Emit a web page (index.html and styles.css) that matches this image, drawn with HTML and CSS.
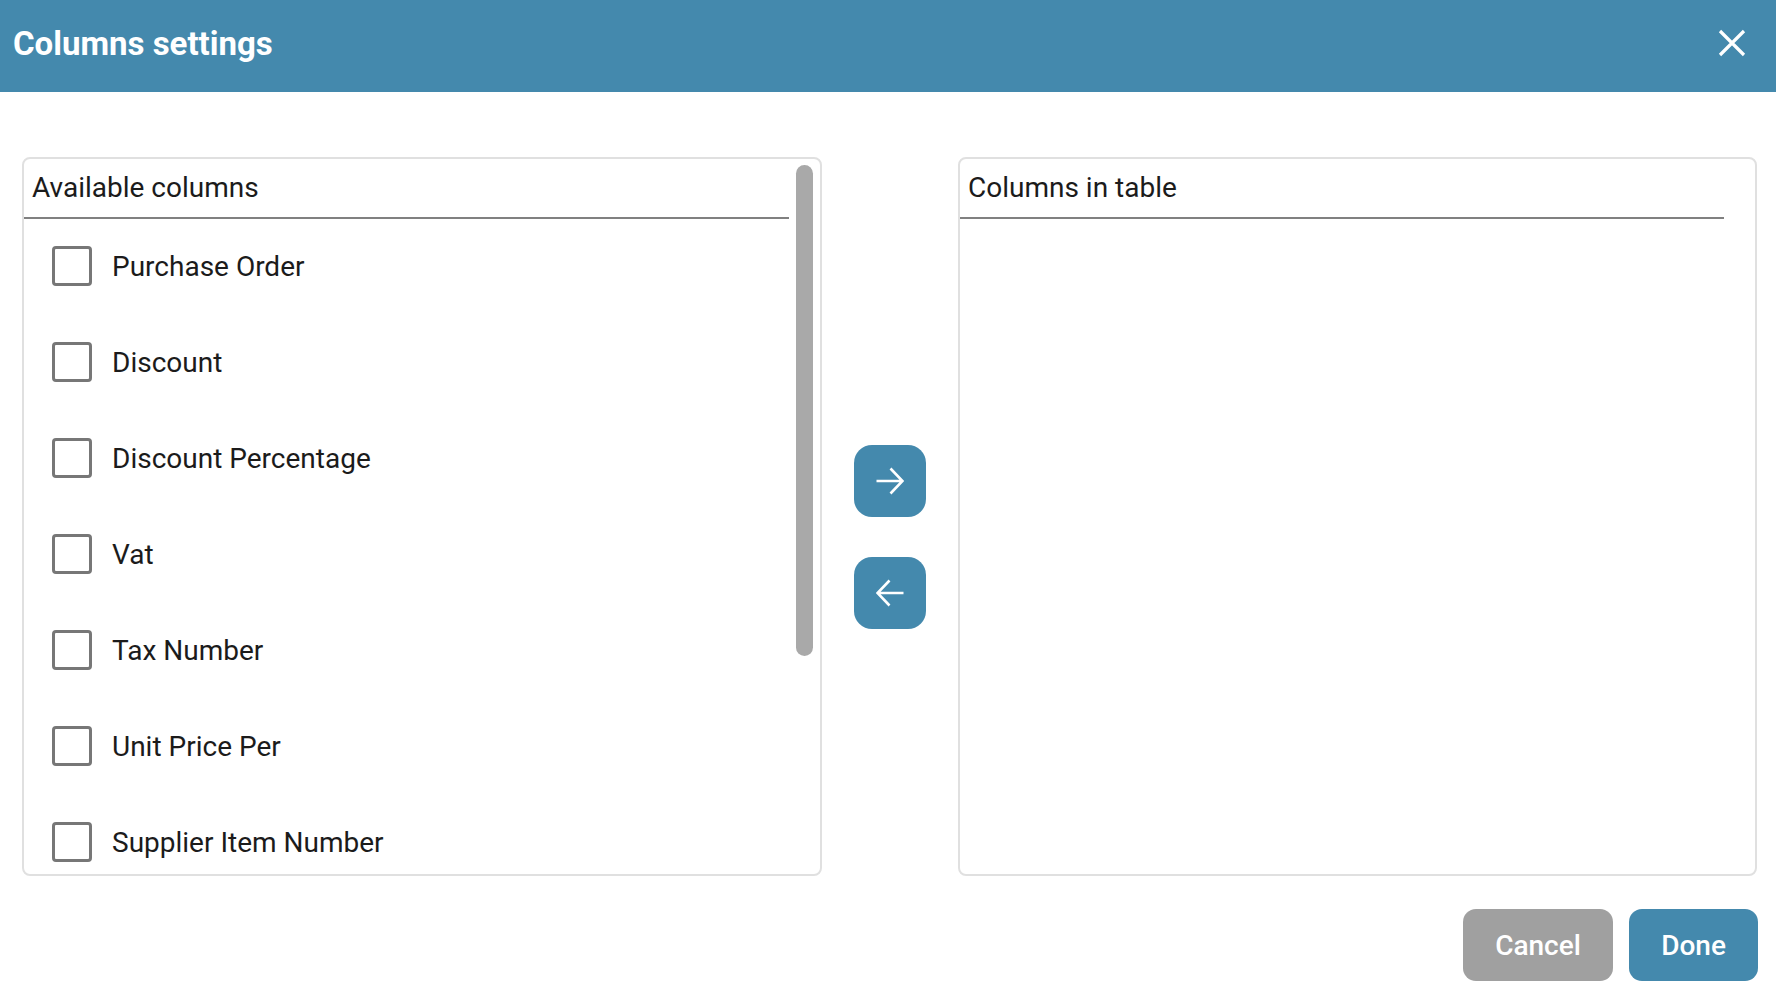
FILE: index.html
```html
<!DOCTYPE html>
<html lang="en">
<head>
<meta charset="utf-8">
<title>Columns settings</title>
<link rel="stylesheet" href="styles.css">
</head>
<body>
<div class="dialog">
  <header class="titlebar">
    <h1 class="title">Columns settings</h1>
    <button class="close" aria-label="Close">
      <svg width="28" height="28" viewBox="0 0 28 28"><path d="M2 2 L26 26 M26 2 L2 26" stroke="#fff" stroke-width="3.2" fill="none"/></svg>
    </button>
  </header>

  <main class="body">
    <section class="panel">
      <div class="panel-content">
        <div class="panel-head">Available columns</div>
        <ul class="list">
          <li class="row"><span class="check"></span><span class="label">Purchase Order</span></li>
          <li class="row"><span class="check"></span><span class="label">Discount</span></li>
          <li class="row"><span class="check"></span><span class="label">Discount Percentage</span></li>
          <li class="row"><span class="check"></span><span class="label">Vat</span></li>
          <li class="row"><span class="check"></span><span class="label">Tax Number</span></li>
          <li class="row"><span class="check"></span><span class="label">Unit Price Per</span></li>
          <li class="row"><span class="check"></span><span class="label">Supplier Item Number</span></li>
        </ul>
      </div>
      <div class="rail"><div class="thumb"></div></div>
    </section>

    <div class="movers">
      <button class="move" aria-label="Add">
        <svg width="28" height="28" viewBox="0 0 28 28"><path d="M0.5 14 H26.5 M14.5 1.5 L26.5 14 L14.5 26.5" stroke="#fff" stroke-width="2.6" fill="none" stroke-linejoin="miter"/></svg>
      </button>
      <button class="move" aria-label="Remove">
        <svg width="28" height="28" viewBox="0 0 28 28"><path d="M27.5 14 H1.5 M13.5 1.5 L1.5 14 L13.5 26.5" stroke="#fff" stroke-width="2.6" fill="none" stroke-linejoin="miter"/></svg>
      </button>
    </div>

    <section class="panel panel-right">
      <div class="panel-content">
        <div class="panel-head">Columns in table</div>
        <ul class="list"></ul>
      </div>
      <div class="rail"></div>
    </section>
  </main>

  <footer class="footer">
    <button class="btn btn-cancel">Cancel</button>
    <button class="btn btn-done">Done</button>
  </footer>
</div>
</body>
</html>
```

FILE: styles.css
```css
* { box-sizing: border-box; }

html, body {
  margin: 0;
  padding: 0;
  background: #ffffff;
}

body {
  width: 1776px;
  height: 1000px;
  overflow: hidden;
  font-family: Roboto, "Liberation Sans", sans-serif;
  color: #1b1b1b;
}

.dialog {
  display: flex;
  flex-direction: column;
  height: 1000px;
}

.titlebar {
  height: 92px;
  flex: 0 0 92px;
  background: #4489ad;
  display: flex;
  align-items: center;
  justify-content: space-between;
  padding: 0 30px 6px 13px;
}

.title {
  margin: 0;
  font-size: 33px;
  font-weight: 700;
  color: #ffffff;
  line-height: normal;
}

.close {
  border: 0;
  background: transparent;
  padding: 0;
  width: 28px;
  height: 28px;
  display: flex;
}

.body {
  display: flex;
  margin-top: 65px;
  padding: 0 19px 0 22px;
  height: 719px;
  flex: 0 0 719px;
}

.panel {
  width: 800px;
  flex: 0 0 800px;
  height: 719px;
  border: 2px solid #e0e0e0;
  border-radius: 8px;
  display: flex;
  overflow: hidden;
}

.panel-right {
  width: 799px;
  flex: 0 0 799px;
}

.panel-content {
  flex: 1 1 auto;
  min-width: 0;
  overflow: hidden;
}

.panel-head {
  font-size: 28px;
  line-height: normal;
  padding: 12px 0 13px 8px;
  border-bottom: 2px solid #808080;
}

.list {
  list-style: none;
  margin: 0;
  padding: 0;
}

.row {
  height: 96px;
  display: flex;
  align-items: center;
  padding-left: 28px;
  padding-bottom: 2px;
}

.check {
  width: 40px;
  height: 40px;
  flex: 0 0 40px;
  border: 3px solid #777777;
  border-radius: 4px;
  background: #fff;
}

.label {
  margin-left: 20px;
  font-size: 28px;
  line-height: normal;
  white-space: nowrap;
}

.rail {
  width: 31px;
  flex: 0 0 31px;
  padding: 6px 7px 0 7px;
}

.thumb {
  height: 491px;
  background: #a9a9a9;
  border-radius: 9px;
}

.movers {
  width: 136px;
  flex: 0 0 136px;
  display: flex;
  flex-direction: column;
  align-items: center;
  padding-top: 288px;
  gap: 40px;
}

.move {
  width: 72px;
  height: 72px;
  border: 0;
  border-radius: 18px;
  background: #4489ad;
  display: flex;
  align-items: center;
  justify-content: center;
  padding: 0;
}

.footer {
  display: flex;
  justify-content: flex-end;
  gap: 16px;
  margin-top: 33px;
  padding-right: 18px;
}

.btn {
  height: 72px;
  border: 0;
  border-radius: 13px;
  padding: 0 32px;
  font-family: Roboto, "Liberation Sans", sans-serif;
  font-size: 28px;
  font-weight: 500;
  color: #ffffff;
}

.btn-cancel {
  background: #a0a0a0;
  width: 150px;
}

.btn-done {
  background: #4489ad;
  width: 129px;
}
```
